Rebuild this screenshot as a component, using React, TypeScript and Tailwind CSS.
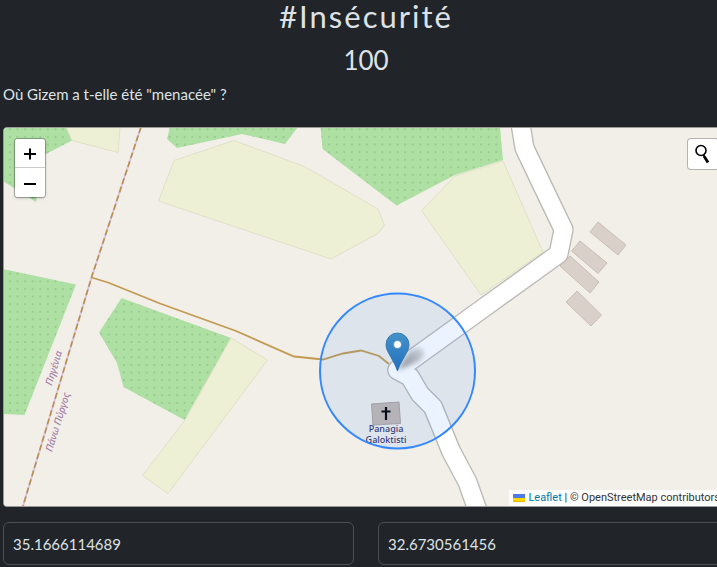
import React, { useState } from "react";

const buildings = [
  "598,222 626,245 618,255 590,232",
  "580,241 607,263 598,273.500 571.500,251",
  "570,256 599,282 590,293 560,266",
  "577,291 601.500,315 591,326 566,302",
];

const roads = [
  "M519 115 L524.500 148 L544.500 190 L563.500 229.500 L558.500 254 L480 310.500 L397.500 370",
  "M397.500 370 L410 377 L420 394 L433 407 L451 451 L467.500 482 L481 520",
];

function MapDrawing() {
  return (
    <svg
      className="block h-full w-full"
      viewBox="4 128 724 378"
      preserveAspectRatio="xMinYMin slice"
      role="img"
      aria-label="Panagia Galoktisti"
    >
      <defs>
        <pattern id="orchard" x="332.900" y="125.500" width="7.600" height="7.600" patternUnits="userSpaceOnUse">
          <rect width="7.600" height="7.600" fill="#aedfa3" />
          <circle cx="3.800" cy="3.800" r="0.650" fill="#6fa76c" />
        </pattern>
        <linearGradient id="pin" x1="0" y1="0" x2="0" y2="1">
          <stop offset="0" stopColor="#4592c9" />
          <stop offset="1" stopColor="#1f70be" />
        </linearGradient>
        <linearGradient id="shade" x1="0" y1="1" x2="1" y2="0">
          <stop offset="0" stopColor="#000000" stopOpacity="0.450" />
          <stop offset="1" stopColor="#000000" stopOpacity="0.120" />
        </linearGradient>
        <filter id="soft" x="-30%" y="-30%" width="160%" height="160%">
          <feGaussianBlur stdDeviation="2.600" />
        </filter>
      </defs>

      <rect x="0" y="120" width="740" height="400" fill="#f2efe9" />

      <g fill="url(#orchard)">
        <path d="M3 127 H66 L72 140.500 L44 155 L36 202 L3 181 Z" />
        <path d="M170 127 H298 L285 144 L242 134 L177 148 L167 139 Z" />
        <path d="M320.500 127 H500 L503 160 L455 175 L396.500 205.500 L322.500 149 Z" />
        <path d="M3 269 L76 284.500 L24.500 415 L3 414 Z" />
        <path d="M121.500 298 L231 338 L184.500 420 L123.500 387 L117 363 L99 332.500 Z" />
      </g>

      <g fill="#edf0d5" stroke="#dfe0c6" strokeWidth="1">
        <path d="M66 127 H120 L118 152.500 L72 140.500 Z" />
        <path d="M174 160.500 L234 140.500 L304.500 166.500 L378 209 L384.500 225 L378 233.500 L331 259 L158.500 201 Z" />
        <path d="M503 161 L543 252 L481 295 L421.500 210.500 L455 176 Z" />
        <path d="M231 338 L267.500 360 L168 493.500 L142.500 475.500 L185 420 Z" />
      </g>

      <g fill="#d9d0c9" stroke="#cbbdb4" strokeWidth="1">
        {buildings.map((points) => (
          <polygon key={points} points={points} />
        ))}
      </g>
      <path d="M371.500 404 L399 402 L400.500 423.500 L373 425 Z" fill="#c5b7b0" stroke="#aba3a3" />

      <g fill="none" strokeLinejoin="round" strokeLinecap="round">
        {roads.map((d) => (
          <path key={d} d={d} stroke="#bcbab8" strokeWidth="20.500" />
        ))}
        {roads.map((d) => (
          <path key={d} d={d} stroke="#ffffff" strokeWidth="17.800" />
        ))}
      </g>

      <g fill="none">
        <path d="M141 127 L91.500 277.500 L23 506" stroke="#d9c6dc" strokeWidth="2" />
        <path d="M141 127 L91.500 277.500 L23 506" stroke="#b98f50" strokeWidth="1.600" strokeDasharray="6 3" />
        <path
          d="M91.500 277.500 L108 282.500 L160 303.500 L236 331 L294 356.500 L323 359.500 L343 353.500 L361 350.500 L379 356 L389 364"
          stroke="#c29a51"
          strokeWidth="1.800"
        />
      </g>

      <g fill="#a67fab" className="font-['Noto_Sans',sans-serif] text-[10px] font-medium italic" textAnchor="middle">
        <text transform="translate(57 369) rotate(-73)">Πηγένια</text>
        <text transform="translate(61 423) rotate(-73)">Πάνω Πύργος</text>
      </g>

      <path d="M386 407 V420 M381.500 411.500 H390.500" stroke="#000000" strokeWidth="2.200" />
      <text fill="#33346b" className="font-['Noto_Sans',sans-serif] text-[9px] font-medium" textAnchor="middle">
        <tspan x="386" y="432">Panagia</tspan>
        <tspan x="386" y="443">Galoktisti</tspan>
      </text>

      <circle cx="397.500" cy="371" r="77.500" fill="#3388ff" fillOpacity="0.1" stroke="#3388ff" strokeWidth="2" />

      <path d="M398 370 L407 354 Q417 344 423 350 Q427 357 415 363 Z" fill="url(#shade)" filter="url(#soft)" />
      <path
        d="M397.500 371 C395 363.500 391 358 388 352 C386.500 349 386 347 386 344.500 A11.500 11.500 0 0 1 409 344.500 C409 347 408.500 349 407 352 C404 358 400 363.500 397.500 371 Z"
        fill="url(#pin)"
        stroke="#2f74ae"
        strokeWidth="0.800"
      />
      <circle cx="397.500" cy="344.500" r="4" fill="#ffffff" stroke="#2f74ae" strokeWidth="0.600" />
    </svg>
  );
}

function ZoomControl() {
  const button = "flex h-[29px] w-full items-center justify-center bg-white pt-0.5 text-black";
  return (
    <div className="absolute top-[10px] left-[10px] w-8 overflow-hidden rounded border border-black/25 bg-white bg-clip-padding shadow-sm">
      <button type="button" aria-label="Zoom in" className={`${button} border-b border-[#cccccc]`}>
        <svg viewBox="0 0 12 12" className="size-3" aria-hidden="true">
          <path d="M6 0.500 V11.500 M0 6 H12" stroke="currentColor" strokeWidth="2" />
        </svg>
      </button>
      <button type="button" aria-label="Zoom out" className={button}>
        <svg viewBox="0 0 12 12" className="size-3" aria-hidden="true">
          <path d="M0 6 H12" stroke="currentColor" strokeWidth="2" />
        </svg>
      </button>
    </div>
  );
}

function SearchControl() {
  return (
    <button
      type="button"
      aria-label="Search"
      className="absolute top-[10px] right-[9px] flex size-8 items-center justify-center rounded border border-black/25 bg-white bg-clip-padding"
    >
      <svg viewBox="0 0 20 20" className="size-5" fill="none" stroke="#000000" aria-hidden="true">
        <circle cx="8" cy="6.500" r="5" strokeWidth="1.600" />
        <path d="M10.500 11 L11.500 13" strokeWidth="2" />
        <path d="M11.300 12.500 L15 18.500" strokeWidth="2.800" />
      </svg>
    </button>
  );
}

function Attribution() {
  return (
    <div className="absolute right-0 bottom-0 flex h-4 items-center bg-white/80 pr-2 pl-1 font-[Roboto,Arial,sans-serif] text-[11px] whitespace-pre text-[#333333]">
      <a href="#leaflet" className="flex items-center gap-[3px] text-[#0078a8]">
        <svg viewBox="0 0 12 8" className="h-2 w-3" aria-hidden="true">
          <path d="M0 0h12v4H0z" fill="#4c7be1" />
          <path d="M0 4h12v3H0z" fill="#ffd500" />
          <path d="M0 7h12v1H0z" fill="#e0bc00" />
        </svg>
        Leaflet
      </a>
      <span> | © OpenStreetMap contributors</span>
    </div>
  );
}

export default function App() {
  const [latitude, setLatitude] = useState("35.1666114689");
  const [longitude, setLongitude] = useState("32.6730561456");
  const field =
    "h-[43px] w-full min-w-0 rounded-md border border-[#495057] bg-[#212529] px-[9px] text-[15px] text-[#dee2e6] outline-none";

  return (
    <div className="min-h-screen overflow-hidden bg-[#212529] font-[Lato,sans-serif] text-[#dee2e6]">
      <main className="-mr-3 pl-[3px]">
        <header className="text-center">
          <h1 className="text-[31px] leading-8 tracking-[2px]">#Insécurité</h1>
          <h2 className="pt-2 text-[26px] leading-10">100</h2>
        </header>
        <p className="pt-0.5 text-[15px] leading-6">Où Gizem a t-elle été "menacée" ?</p>

        <section className="relative mt-[21px] h-[380px] overflow-hidden rounded border border-[#9b9a99] bg-[#f2efe9]">
          <MapDrawing />
          <ZoomControl />
          <SearchControl />
          <Attribution />
        </section>

        <form className="mt-[15px] grid grid-cols-2 gap-6">
          <input
            aria-label="Latitude"
            className={field}
            value={latitude}
            onChange={(event) => setLatitude(event.target.value)}
          />
          <input
            aria-label="Longitude"
            className={field}
            value={longitude}
            onChange={(event) => setLongitude(event.target.value)}
          />
        </form>
      </main>
    </div>
  );
}
